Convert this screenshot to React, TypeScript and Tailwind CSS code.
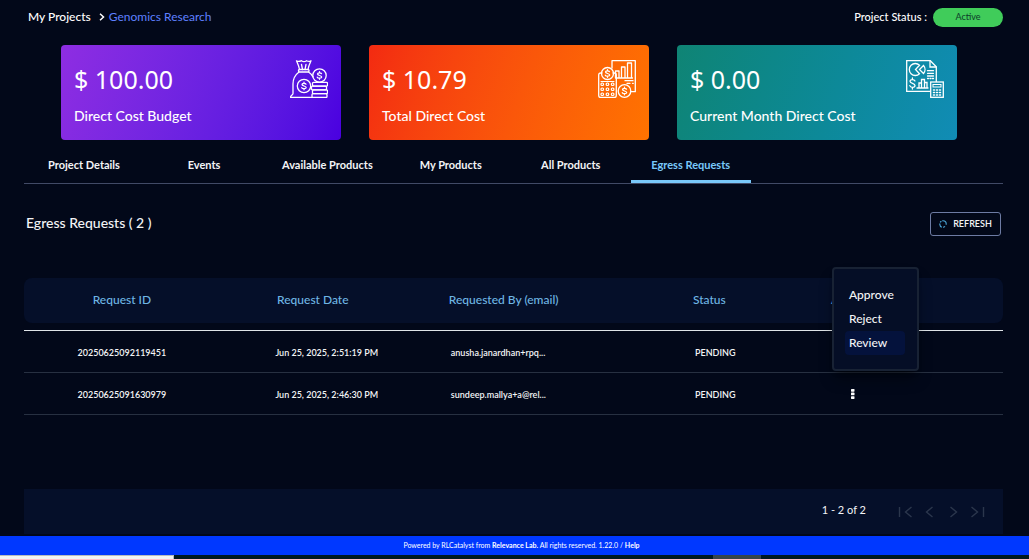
import React from 'react';

const stroke = {
  fill: 'none',
  stroke: 'currentColor',
  strokeWidth: 1.3,
  strokeLinejoin: 'round' as const,
  strokeLinecap: 'round' as const,
};

const dollar = (cx: number, cy: number) =>
  `M${cx + 2} ${cy - 1.8}C${cx + 1.5} ${cy - 3} ${cx - 2} ${cy - 3.1} ${cx - 2} ${cy - 1.4}C${cx - 2} ${cy + 0.2} ${cx + 2.2} ${cy - 0.2} ${cx + 2.2} ${cy + 1.5}C${cx + 2.2} ${cy + 3.1} ${cx - 1.8} ${cy + 3} ${cx - 2.2} ${cy + 1.7}M${cx} ${cy - 3.8}v1.2M${cx} ${cy + 2.6}v1.2`;

function MoneyBagIcon() {
  return (
    <svg viewBox="0 0 38 38" className="size-[38px]" aria-hidden="true" {...stroke}>
      <path d="M9.500 9.500C9 6 7.500 3 6.500.8c2.500 1.400 4 .3 5-.1 1.500 1.200 3.500 1.200 5 0 1.500.8 3 1.200 4.500.1C20 3 18.500 6 18 9.500" />
      <path d="M11.500 4.500l1 5M16 4.500l-1 5" />
      <rect x="8.500" y="9.500" width="10.500" height="2.500" rx="1" />
      <path d="M9 12C5 15 3 19 3 24v9.500c0 1.500-2.500 1.500-2.500 4H22M18.500 12c2 1.200 3.500 3 4.500 5" />
      <circle cx="14" cy="26" r="6.700" />
      <path d={dollar(14, 26)} />
      <circle cx="29.500" cy="15.500" r="6.700" />
      <path d={dollar(29.5, 15.5)} />
      <rect x="22.500" y="22.300" width="15" height="3.800" rx="1" />
      <rect x="21.500" y="26.100" width="15" height="3.800" rx="1" />
      <rect x="22.500" y="29.900" width="15" height="3.800" rx="1" />
      <rect x="22" y="33.700" width="15" height="3.800" rx="1" />
    </svg>
  );
}

function CostReportIcon() {
  return (
    <svg viewBox="0 0 38 38" className="size-[38px]" aria-hidden="true" {...stroke}>
      <path d="M14 8V.7h23.300v31H33" />
      <path d="M18 18h16.500M17.500 18v-7h3.500v7M23.500 18V7h3.500v11M29.500 18V3h4v15M27 20.700h8M29 23.300h3M34.500 23.300h.8" />
      <path d="M4 13H2.700C1.500 13 .7 13.800 .7 15v20.500c0 1.200.8 2 2 2h13.600c1.200 0 2-.8 2-2V15c0-1.200-.8-2-2-2H15" />
      <circle cx="9.500" cy="13.500" r="6" />
      <path d={dollar(9.5, 13.5)} />
      <path d="M3 21.500h13" strokeWidth="1" />
      <g strokeWidth="1.200">
        <rect x="3" y="23" width="2.500" height="2.500" rx="1" />
        <rect x="8.200" y="23" width="2.500" height="2.500" rx="1" />
        <rect x="13.400" y="23" width="2.500" height="2.500" rx="1" />
        <rect x="3" y="28" width="2.500" height="2.500" rx="1" />
        <rect x="8.200" y="28" width="2.500" height="2.500" rx="1" />
        <rect x="13.400" y="28" width="2.500" height="2.500" rx="1" />
        <rect x="3" y="33" width="2.500" height="2.500" rx="1" />
        <rect x="8.200" y="33" width="2.500" height="2.500" rx="1" />
        <rect x="13.400" y="33" width="2.500" height="2.500" rx="1" />
      </g>
      <circle cx="26.500" cy="31" r="6.300" />
      <path d={dollar(26.5, 31)} />
    </svg>
  );
}

function MonthReportIcon() {
  return (
    <svg viewBox="0 0 38 38" className="size-[38px]" aria-hidden="true" {...stroke} strokeLinejoin="miter">
      <path d="M24 31.300H.7V.7h23.600l6 6V21.500" />
      <path d="M24 1v6h6" />
      <path d="M13.500 5.200A6 6 0 1 0 13.500 13.800L9.500 9.500Z" />
      <path d="M17.500 5.500L13.500 9.500l4 4c2-2.300 2-5.700 0-8Z" />
      <path d="M21.500 10.700h6M21.500 13.300h6M21.500 16h6M21.500 18.500h1M24 18.500h1M26.500 18.500h1" />
      <path d="M9 21c-.8-2-5-2-5 .3 0 2.500 5 1.500 5 4.200 0 2.500-4.600 2.400-5.200.2M6.400 18v1.500M6.400 27.500V29" />
      <path d="M11 28h11M13 28v-5h2.500v5M15.500 28v-8.500h3V28M18.500 28v-5.500H21V28" />
      <rect x="24.700" y="22" width="12.600" height="15.300" />
      <rect x="27" y="24.500" width="8" height="2.500" strokeWidth="1" />
      <path d="M27.500 30h1M30.500 30h1M33.500 30h1M27.500 32.500h1M30.500 32.500h1M33.500 32.500h1M27.500 35h1M30.500 35h1M33.500 35h1" strokeWidth="1.500" />
    </svg>
  );
}

const cards = [
  { amount: '$ 100.00', label: 'Direct Cost Budget', icon: <MoneyBagIcon />, tone: 'from-[#8e2de2] to-[#4a00e0]' },
  { amount: '$ 10.79', label: 'Total Direct Cost', icon: <CostReportIcon />, tone: 'from-[#f32a11] to-[#ff7300]' },
  { amount: '$ 0.00', label: 'Current Month Direct Cost', icon: <MonthReportIcon />, tone: 'from-[#0f8474] to-[#118cb5]' },
];

const tabs = ['Project Details', 'Events', 'Available Products', 'My Products', 'All Products', 'Egress Requests'];

const requests = [
  { id: '20250625092119451', date: 'Jun 25, 2025, 2:51:19 PM', by: 'anusha.janardhan+rpq...', status: 'PENDING', open: true },
  { id: '20250625091630979', date: 'Jun 25, 2025, 2:46:30 PM', by: 'sundeep.mallya+a@rel...', status: 'PENDING', open: false },
];

const pagers = [
  { label: 'First page', d: 'M1 1v10M13 1L7 6l6 5' },
  { label: 'Previous page', d: 'M10 1L4 6l6 5' },
  { label: 'Next page', d: 'M4 1l6 5-6 5' },
  { label: 'Last page', d: 'M1 1l6 5-6 5M13 1v10' },
];

function ActionMenu() {
  return (
    <div
      role="menu"
      className="absolute -top-16 left-[15px] z-10 flex w-[87px] flex-col rounded-sm border-2 border-[#182234] bg-[#050e26] py-[14px] pr-3 pl-[11px] shadow-lg shadow-black/40"
    >
      {['Approve', 'Reject', 'Review'].map((item) => (
        <button
          key={item}
          role="menuitem"
          className={`h-6 rounded-sm px-1 text-left text-[12px] leading-6 font-medium text-gray-100 ${item === 'Review' ? 'bg-[#04123c]' : ''}`}
        >
          {item}
        </button>
      ))}
    </div>
  );
}

export default function App() {
  return (
    <div className="flex min-h-screen flex-col bg-[#020819] font-['Lato','Noto_Sans',sans-serif] text-gray-100">
      <main className="flex grow flex-col pr-[26px] pl-6">
        <header className="flex h-[34px] items-center justify-between">
          <nav aria-label="Breadcrumb" className="flex items-center pl-1 text-[12px]">
            <a href="#projects" className="font-medium text-white">My Projects</a>
            <svg viewBox="0 0 6 8" className="mr-1 ml-2 h-2 w-[6px]" aria-hidden="true" fill="none" stroke="white" strokeWidth="1.500">
              <path d="M1 .8L4.500 4 1 7.200" />
            </svg>
            <a href="#genomics" className="text-[#5f80ff]">Genomics Research</a>
          </nav>
          <div className="flex items-center gap-[6px] text-[11px]">
            <span className="font-medium text-white">Project Status :</span>
            <span className="h-[19px] w-[70px] rounded-full bg-[#40cc5a] text-center text-[9px] leading-[18px] text-[#0d3b2a]">Active</span>
          </div>
        </header>

        <section aria-label="Costs" className="mt-[11px] mr-[46px] ml-[37px] grid grid-cols-3 gap-7">
          {cards.map((card) => (
            <article key={card.label} className={`flex h-[95px] justify-between rounded-[4px] bg-linear-110 px-[13px] text-white ${card.tone}`}>
              <div className="flex flex-col pt-[19px]">
                <p className="font-['Noto_Sans',sans-serif] text-[25px] leading-[30px]">{card.amount}</p>
                <h2 className="mt-3 text-[14px] leading-5 font-medium">{card.label}</h2>
              </div>
              <div className="pt-[15px]">{card.icon}</div>
            </article>
          ))}
        </section>

        <div role="tablist" className="mt-2 flex border-b border-[#414a66]">
          {tabs.map((tab) => {
            const active = tab === 'Egress Requests';
            return (
              <button
                key={tab}
                role="tab"
                aria-selected={active}
                className={`h-[35px] min-w-[120px] border-b-3 px-[18px] pt-[2px] text-[11px] font-bold whitespace-nowrap ${active ? 'border-[#79c8f9] text-[#79c8f9]' : 'border-transparent'}`}
              >
                {tab}
              </button>
            );
          })}
        </div>

        <div className="mt-7 mr-[2px] flex items-center justify-between pl-[2px]">
          <h1 className="pb-[2px] text-[14px] leading-5 font-medium">Egress Requests ( 2 )</h1>
          <button className="flex h-6 w-[71px] items-center justify-center gap-[6px] rounded-[3px] border border-[#6d7ba3] text-[9px] font-semibold">
            <svg viewBox="0 0 10 10" className="size-2" aria-hidden="true" fill="none" stroke="#4aa6d8" strokeWidth="1.400">
              <path d="M4 1h1a4 4 0 0 1 4 4v1M7.500 8A4 4 0 0 1 5 9M3.500 9A4 4 0 0 1 1 5.500V4.500M1.500 3A4 4 0 0 1 3 1.500" />
            </svg>
            REFRESH
          </button>
        </div>

        <table className="mt-[42px] w-full table-fixed border-separate border-spacing-0">
          <colgroup>
            <col className="w-[20%]" />
            <col className="w-[19%]" />
            <col className="w-[20%]" />
            <col className="w-[22%]" />
            <col className="w-[19%]" />
          </colgroup>
          <thead>
            <tr className="h-[45px] text-[12px] text-[#6fb6e4]">
              <th className="rounded-l-lg bg-[#050f29] pb-[2px] font-medium">Request ID</th>
              <th className="bg-[#050f29] pb-[2px] font-medium">Request Date</th>
              <th className="bg-[#050f29] pb-[2px] font-medium">Requested By (email)</th>
              <th className="bg-[#050f29] pb-[2px] font-medium">Status</th>
              <th className="rounded-r-lg bg-[#050f29] pb-[2px] pl-[14px] text-left font-medium">Actions</th>
            </tr>
            <tr aria-hidden="true">
              <td colSpan={5} className="h-2 border-b border-[#dfe4e8]" />
            </tr>
          </thead>
          <tbody className="text-[9px] font-semibold">
            {requests.map((r) => (
              <tr key={r.id} className="h-[42px]">
                <td className="border-b border-[#273041] pt-[2px] text-center">{r.id}</td>
                <td className="border-b border-[#273041] pt-[2px] pl-7 text-center">{r.date}</td>
                <td className="border-b border-[#273041] pt-[2px] pl-[45px]">{r.by}</td>
                <td className="border-b border-[#273041] pt-[2px] pl-3 text-center">{r.status}</td>
                <td className="relative border-b border-[#273041] pb-1 pl-[32px]">
                  <button aria-label="Request actions" className="flex size-2 justify-center">
                    <svg viewBox="0 0 4 12" className="h-3 w-1 shrink-0" aria-hidden="true" fill="white">
                      <rect y="1" width="3.500" height="2.700" rx=".6" />
                      <rect y="4.600" width="3.500" height="2.700" rx=".6" />
                      <rect y="8.200" width="3.500" height="2.700" rx=".6" />
                    </svg>
                  </button>
                  {r.open && <ActionMenu />}
                </td>
              </tr>
            ))}
          </tbody>
        </table>

        <div className="mt-auto mb-[2px] flex h-[45px] items-center justify-end gap-8 bg-[#050f29] pr-[18px]">
          <span className="pb-[2px] text-[11px]">1 - 2 of 2</span>
          <div className="flex gap-[9px]">
            {pagers.map((p) => (
              <button key={p.label} aria-label={p.label} disabled className="text-[#2b364c]">
                <svg viewBox="0 0 14 12" className="h-3 w-[15px]" aria-hidden="true" fill="none" stroke="currentColor" strokeWidth="1.400">
                  <path d={p.d} />
                </svg>
              </button>
            ))}
          </div>
        </div>
      </main>

      <footer className="h-[19px] bg-[#0038ff] pl-[14px] text-center text-[7px] leading-[19px] text-white">
        Powered by RLCatalyst from <strong>Relevance Lab.</strong> All rights reserved. 1.22.0 / <a href="#help" className="font-bold">Help</a>
      </footer>
      <div className="flex h-1 bg-[#001820]">
        <div className="w-[174px] border-t border-r border-[#b8bcbd] bg-[#f3f3f3]" />
        <div className="ml-auto w-12 bg-[#36444c]" />
        <div className="w-[26%]" />
      </div>
    </div>
  );
}
